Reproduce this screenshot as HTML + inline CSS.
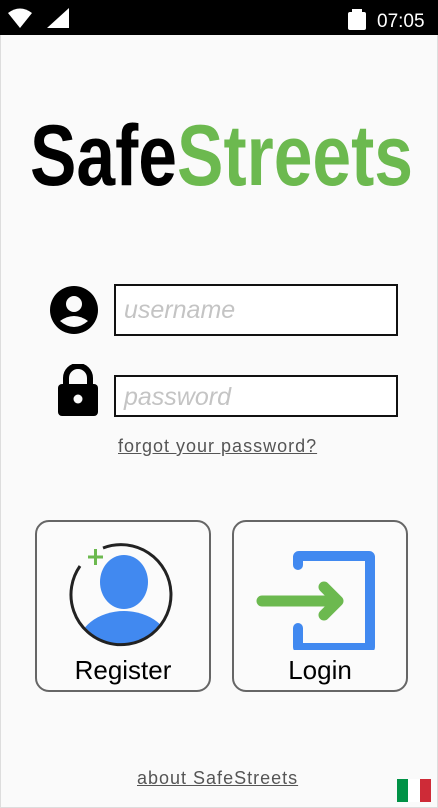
<!DOCTYPE html>
<html><head><style>
*{margin:0;padding:0;box-sizing:border-box}
body{width:438px;height:808px;background:#fafafa;position:relative;overflow:hidden;font-family:"Liberation Sans",sans-serif}
.frame{position:absolute;left:0;top:0;width:438px;height:808px;border:1px solid #ddd;border-top:none}
.status{position:absolute;left:0;top:0;width:438px;height:35px;background:#000}
.field{position:absolute;left:114px;width:284px;border:2px solid #111;background:#fff;color:#c4c4c4;font-style:italic;font-size:25px;padding-left:8px}
.link{position:absolute;color:#555;text-decoration:underline;font-size:18px;letter-spacing:1px}
.btn{position:absolute;top:520px;width:176px;height:172px;border:2px solid #666;border-radius:14px;background:#fbfbfb}
.btn span{position:absolute;left:0;right:0;top:133px;text-align:center;font-size:26px;color:#000}
</style></head><body>
<div class="frame"></div>
<div class="status">
<svg width="438" height="35" style="position:absolute;left:0;top:0">
<path d="M8 13 Q20 4 32 13 L20 28 Z" fill="#fff"/>
<path d="M47 28 L69 8 L69 28 Z" fill="#fff"/>
<rect x="348" y="12" width="18" height="18" rx="2" fill="#fff"/><rect x="352" y="9" width="10" height="4" fill="#fff"/>
<text x="377" y="27" font-family="Liberation Sans" font-size="19" fill="#fff">07:05</text>
</svg></div>
<svg width="438" height="100" style="position:absolute;left:0;top:100px">
<text x="30" y="85" font-family="Liberation Sans" font-weight="bold" font-size="86" textLength="383" lengthAdjust="spacingAndGlyphs"><tspan fill="#000">Safe</tspan><tspan fill="#6cb94f">Streets</tspan></text>
</svg>
<svg width="50" height="50" style="position:absolute;left:49px;top:285px" viewBox="0 0 50 50">
<circle cx="25" cy="25" r="24" fill="#000"/><circle cx="25" cy="19" r="8" fill="#fafafa"/><path d="M11 36 Q25 26 39 36 Q25 48 11 36Z" fill="#fafafa"/></svg>
<svg width="44" height="54" style="position:absolute;left:56px;top:364px" viewBox="0 0 44 54">
<path d="M10 22 V14 A12 12 0 0 1 34 14 V22" stroke="#000" stroke-width="6" fill="none"/>
<rect x="2" y="20" width="40" height="32" rx="4" fill="#000"/><circle cx="22" cy="35" r="4.5" fill="#fafafa"/></svg>
<div class="field" style="top:284px;height:52px;line-height:48px">username</div>
<div class="field" style="top:375px;height:42px;line-height:40px">password</div>
<div class="link" style="left:118px;top:436px">forgot your password?</div>
<div class="btn" style="left:35px"><span>Register</span>
<svg width="176" height="130" style="position:absolute;left:-2px;top:-2px">
<defs><clipPath id="c"><circle cx="87" cy="75" r="49"/></clipPath></defs>
<g clip-path="url(#c)"><ellipse cx="89" cy="62" rx="24" ry="27" fill="#4189f0"/><ellipse cx="89" cy="128" rx="47" ry="37" fill="#4189f0"/></g>
<path d="M68 28 A50 50 0 1 1 45 46" stroke="#222" stroke-width="3" fill="none"/>
<path d="M53 37 H68 M60.5 29 V45" stroke="#6cb94f" stroke-width="3"/>
</svg></div>
<div class="btn" style="left:232px"><span>Login</span>
<svg width="176" height="130" style="position:absolute;left:-2px;top:-2px">
<path d="M66 45 V37 Q66 36 67 36 H137 Q138 36 138 37 V127 Q138 128 137 128 H67 Q66 128 66 127 V108" stroke="#4189f0" stroke-width="10" fill="none" stroke-linecap="round"/>
<path d="M30 81 H106 M92 67 L106 81 L92 95" stroke="#6cb94f" stroke-width="11" fill="none" stroke-linecap="round" stroke-linejoin="round"/>
</svg></div>
<div class="link" style="left:137px;top:768px">about SafeStreets</div>
<div style="position:absolute;left:397px;top:779px;width:34px;height:23px;display:flex"><div style="flex:1;background:#009246"></div><div style="flex:1;background:#fff"></div><div style="flex:1;background:#ce2b37"></div></div>
</body></html>
